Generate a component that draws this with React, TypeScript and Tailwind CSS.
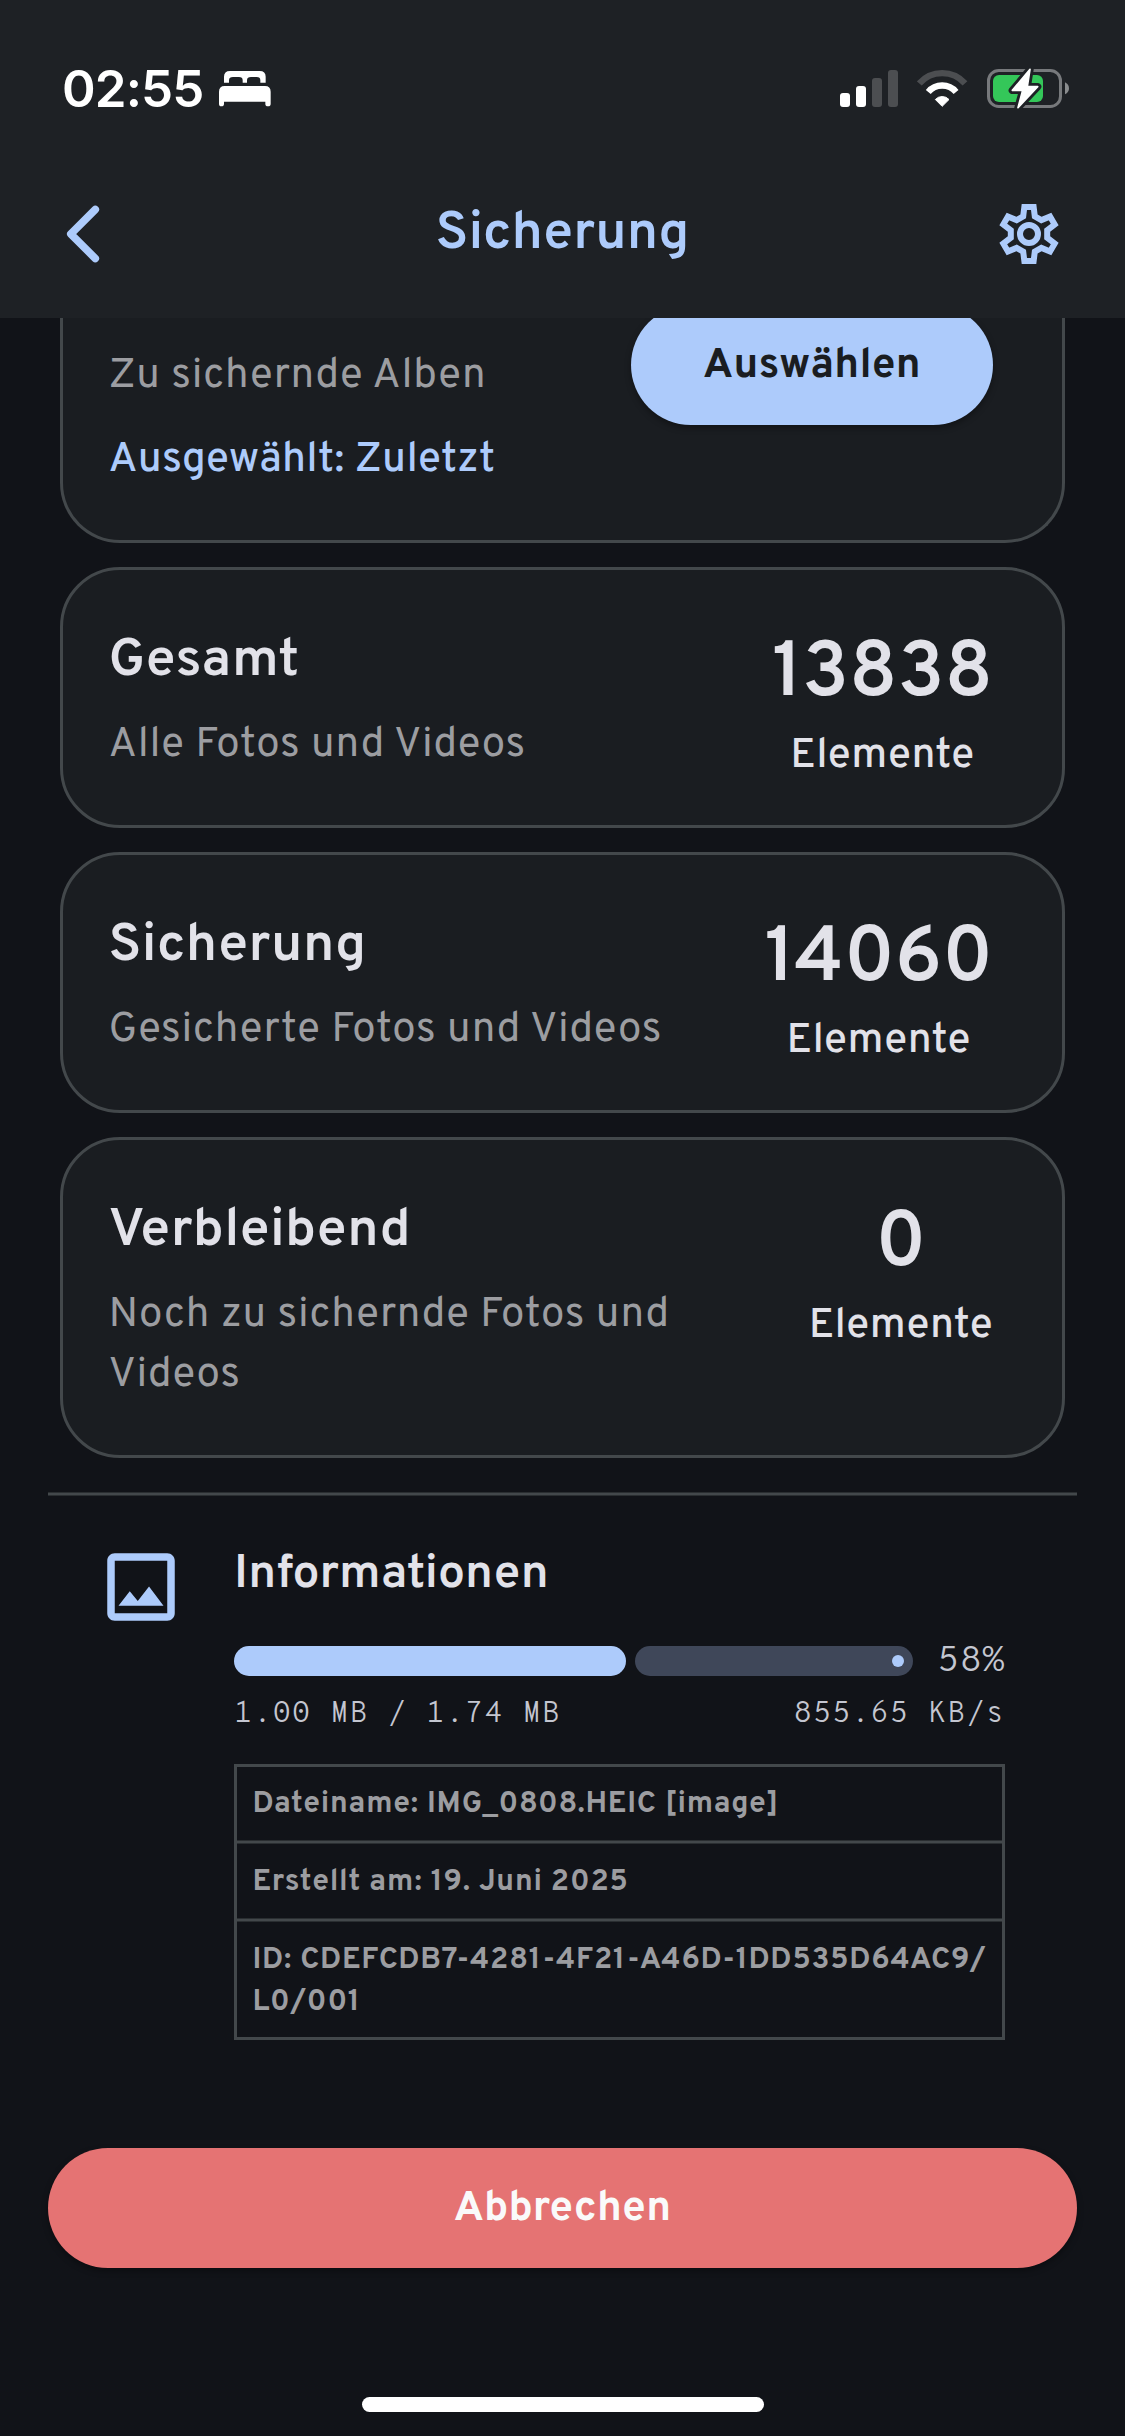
import React from "react";

const GEAR_TOOTH: [number, number][] = [
  [-8.6, -19.5],
  [-7.3, -30],
  [7.3, -30],
  [8.6, -19.5],
];

const gearPoints = [0, 60, 120, 180, 240, 300]
  .flatMap((deg) => {
    const a = (deg * Math.PI) / 180;
    return GEAR_TOOTH.map(([x, y]) =>
      [
        (x * Math.cos(a) - y * Math.sin(a)).toFixed(2),
        (x * Math.sin(a) + y * Math.cos(a)).toFixed(2),
      ].join(","),
    );
  })
  .join(" ");

function GearIcon() {
  return (
    <svg width="72" height="72" viewBox="-36 -36 72 72" fill="none" stroke="#ADCBFB">
      <clipPath id="gear-clip">
        <polygon points={gearPoints} />
      </clipPath>
      <polygon points={gearPoints} strokeWidth="12" clipPath="url(#gear-clip)" />
      <circle r="9" strokeWidth="6" />
    </svg>
  );
}

function BackIcon() {
  return (
    <svg width="72" height="72" viewBox="48 198 72 72" fill="none" stroke="#ADCBFB">
      <path d="M95.3 209.5 L70.8 234 L95.3 258.5" strokeWidth="7.6" strokeLinecap="round" strokeLinejoin="round" />
    </svg>
  );
}

function BedIcon() {
  return (
    <svg width="52" height="36" viewBox="0 0 156 108" fill="#fff">
      <path d="M15 35V17Q15 0 33 0H122Q140 0 140 17V35H124V28Q124 18 113 18H96Q84 18 84 28V35H71V28Q71 18 60 18H42Q30 18 30 28V35Z" />
      <path d="M0 62Q0 45 17 45H138Q155 45 155 62V98Q155 106 147 106Q139 106 139 98V92H15V98Q15 106 7 106Q0 106 0 98Z" />
    </svg>
  );
}

function SignalIcon() {
  return (
    <svg width="58" height="37" viewBox="0 0 58 37">
      <rect x="0" y="23" width="10" height="14" rx="3" fill="#fff" />
      <rect x="16" y="16" width="10" height="21" rx="3" fill="#fff" />
      <rect x="32" y="8" width="10" height="29" rx="3" fill="#4C4E51" />
      <rect x="48" y="0" width="10" height="37" rx="3" fill="#4C4E51" />
    </svg>
  );
}

function WifiIcon() {
  return (
    <svg width="51" height="37" viewBox="0 0 153 111" fill="none">
      <path d="M7 40.4A91.5 91.5 0 0 1 144 40.4" stroke="#4C4E51" strokeWidth="19" />
      <path d="M33.8 66A54.5 54.5 0 0 1 117.2 66" stroke="#fff" strokeWidth="19" />
      <path d="M75.5 109L55 88.5A28 28 0 0 1 96 88.5Z" fill="#fff" stroke="#fff" strokeWidth="3" strokeLinejoin="round" />
    </svg>
  );
}

function BatteryIcon() {
  const bolt = "M129 4L76 67H107L93 119L152 56H121Z";
  return (
    <svg width="82" height="41" viewBox="0 0 246 123" fill="none">
      <rect x="4.5" y="7.5" width="216" height="108" rx="31" stroke="#77797C" strokeWidth="9" />
      <rect x="18" y="21" width="150" height="81" rx="18" fill="#34C759" />
      <path d="M234 43Q246 49 246 61Q246 73 234 79Z" fill="#8A8C8E" />
      <path d={bolt} fill="#1E2125" stroke="#1E2125" strokeWidth="22" strokeLinejoin="round" />
      <path d={bolt} fill="#fff" stroke="#fff" strokeWidth="5" strokeLinejoin="round" />
    </svg>
  );
}

function ImageIcon() {
  return (
    <svg width="90" height="90" viewBox="0 0 24 24" fill="#ADCBFB">
      <path d="M19 5v14H5V5h14m0-2H5c-1.1 0-2 .9-2 2v14c0 1.1.9 2 2 2h14c1.1 0 2-.9 2-2V5c0-1.1-.9-2-2-2zm-4.86 8.86l-3 3.87L9 13.14 6 17h12l-3.86-5.14z" />
    </svg>
  );
}

function StatCard({ title, subtitle, value }: { title: string; subtitle: string; value: string }) {
  return (
    <section className="flex items-start justify-between rounded-[60px] border-[3px] border-[#43484B] bg-[#1A1D21] pr-[69px] pl-[45.5px]">
      <div className="max-w-[600px] pt-[55.5px] pb-[49.5px]">
        <h2 className="text-[54px] leading-[72px] font-semibold tracking-[0.42px] text-[#E2E2E9]">{title}</h2>
        <p className="mt-[18px] text-[42px] leading-[60px] font-normal tracking-[0.74px] text-[#9C9DA1]">{subtitle}</p>
      </div>
      <div className="flex flex-col items-center pt-[57.5px]">
        <span className="text-[78px] leading-[96px] font-semibold tracking-[-0.05px] text-[#E2E2E9]">{value}</span>
        <span className="mt-[3px] text-[42px] leading-[60px] font-medium tracking-[0.3px] text-[#E2E2E9]">Elemente</span>
      </div>
    </section>
  );
}

export default function App() {
  return (
    <div className="flex h-[2436px] w-[1125px] flex-col overflow-hidden bg-[#111318] font-['Overpass','Roboto',sans-serif]">
      <header className="h-[318px] shrink-0 bg-[#1E2125]">
        <div className="flex h-[150px] items-center justify-between pt-[27px] pr-[56px] pl-[62px]">
          <div className="flex items-center gap-[15px]">
            <span className="font-['Inter',sans-serif] text-[51px] leading-[60px] font-semibold tracking-[-0.86px] text-white">02:55</span>
            <BedIcon />
          </div>
          <div className="flex items-center gap-[19px]">
            <SignalIcon />
            <WifiIcon />
            <BatteryIcon />
          </div>
        </div>
        <div className="flex h-[168px] items-center px-12">
          <button className="w-[84px]" aria-label="Zurück">
            <BackIcon />
          </button>
          <h1 className="flex-1 pt-[2px] text-center text-[54px] leading-[72px] font-semibold tracking-[-0.05px] text-[#ADCBFB]">Sicherung</h1>
          <button className="w-[84px]" aria-label="Einstellungen">
            <GearIcon />
          </button>
        </div>
      </header>

      <main className="flex flex-1 flex-col overflow-hidden">
        <div className="flex flex-col gap-6 px-[60px]">
          <section className="flex items-start justify-between rounded-b-[60px] border-[3px] border-t-0 border-[#43484B] bg-[#1A1D21] pr-[69px] pb-[49.5px] pl-[45.5px]">
            <div className="pt-[28.5px]">
              <p className="text-[42px] leading-[60px] font-normal tracking-[0.74px] text-[#9C9DA1]">Zu sichernde Alben</p>
              <p className="mt-6 text-[42px] leading-[60px] font-medium tracking-[0.3px] text-[#ADCBFB]">Ausgewählt: Zuletzt</p>
            </div>
            <button className="-mt-[13px] h-[120px] w-[362px] rounded-[60px] bg-[#ADCBFB] pt-[3px] text-[42px] leading-[60px] font-bold tracking-[0.3px] text-[#1A1D21] shadow-[0_3px_6px_rgba(0,0,0,0.35)]">
              Auswählen
            </button>
          </section>
          <StatCard title="Gesamt" subtitle="Alle Fotos und Videos" value="13838" />
          <StatCard title="Sicherung" subtitle="Gesicherte Fotos und Videos" value="14060" />
          <StatCard title="Verbleibend" subtitle="Noch zu sichernde Fotos und Videos" value="0" />
        </div>

        <div className="mx-12 mt-[34px] h-1 shrink-0 border-y border-[#2A2E31] bg-[#43484B]" />

        <section className="flex items-start gap-12 pt-[43px] pr-[120px] pl-24">
          <div className="mt-[3px] shrink-0">
            <ImageIcon />
          </div>
          <div className="flex flex-1 flex-col">
            <h2 className="text-[48px] leading-[72px] font-semibold tracking-[0.3px] text-[#E2E2E9]">Informationen</h2>
            <div className="mt-[24px] flex h-[51px] items-center justify-between">
              <div className="flex w-[679px] gap-[9px]">
                <div className="h-[30px] w-[392px] rounded-full bg-[#ADCBFB]" />
                <div className="flex h-[30px] flex-1 items-center justify-end rounded-full bg-[#3F4759] pr-[9px]">
                  <div className="size-3 rounded-full bg-[#ADCBFB]" />
                </div>
              </div>
              <span className="pt-[3px] font-['Overpass_Mono','Liberation_Mono',monospace] text-[36px] leading-[51px] font-light tracking-[0.45px] text-[#C4C6D0]">58%</span>
            </div>
            <div className="mt-[7.5px] flex justify-between font-['Overpass_Mono','Liberation_Mono',monospace] text-[30px] leading-[42px] font-light tracking-[0.75px] text-[#C4C6D0]">
              <span>1.00 MB / 1.74 MB</span>
              <span>855.65 KB/s</span>
            </div>
            <div className="mt-[28.5px] flex flex-col border-[3px] border-[#43484B] text-[30px] leading-[42px] font-bold tracking-[0.74px] text-[#9C9DA1]">
              <div className="h-[73px] pt-[16.5px] pl-[15.5px]">Dateiname: IMG_0808.HEIC [image]</div>
              <div className="h-1 border-y border-[#2A2E31] bg-[#43484B]" />
              <div className="h-[74px] pt-[17.5px] pl-[15.5px]">Erstellt am: 19. Juni 2025</div>
              <div className="h-1 border-y border-[#2A2E31] bg-[#43484B]" />
              <div className="h-[115px] pt-[18px] pl-[15.5px]">
                ID: CDEFCDB7-4281-4F21-A46D-1DD535D64AC9/
                <wbr />
                L0/001
              </div>
            </div>
          </div>
        </section>

        <button className="mx-12 mt-[108px] h-[120px] shrink-0 rounded-[60px] bg-[#E57373] pt-[3px] text-[42px] leading-[60px] font-bold tracking-[0.3px] text-[#FAFAFA] shadow-[0_3px_6px_rgba(0,0,0,0.35)]">
          Abbrechen
        </button>
      </main>

      <div className="mb-6 ml-[362px] h-[15px] w-[402px] shrink-0 rounded-full bg-white" />
    </div>
  );
}
